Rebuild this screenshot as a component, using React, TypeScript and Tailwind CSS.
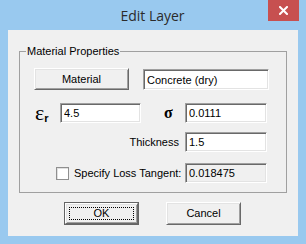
const sunken =
  'border border-t-[#a0a0a0] border-l-[#a0a0a0] border-b-white border-r-white shadow-[inset_1px_1px_0_#696969,inset_-1px_-1px_0_#e3e3e3] outline-none pl-[3px] text-[11px] text-black';

const raised =
  'border border-t-white border-l-white border-b-[#696969] border-r-[#696969] shadow-[inset_1px_1px_0_#e3e3e3,inset_-1px_-1px_0_#a0a0a0] bg-[#f0f0f0] flex items-center justify-center';

function Field({ value, width, disabled }: { value: string; width: string; disabled?: boolean }) {
  return (
    <input
      readOnly
      defaultValue={value}
      className={`${sunken} ${width} h-[20px] ${disabled ? 'bg-[#f0f0f0] text-[#6d6d6d]' : 'bg-white'}`}
    />
  );
}

export default function App() {
  return (
    <div className="w-[306px] h-[244px] bg-[#99c9ef] flex flex-col font-['Liberation_Sans',Arial,sans-serif] text-[11px] text-black select-none">
      {/* Title bar */}
      <div className="relative h-[30px] flex items-center justify-center">
        <span className="font-['Open_Sans',sans-serif] text-[14px] text-[#2b2b2b] -ml-[1px]">Edit Layer</span>
        <div className="absolute top-0 right-[7px] w-[31px] h-[21px] bg-[#c75050] flex items-center justify-center">
          <svg width="9" height="9" viewBox="0 0 9 9">
            <path d="M1 1 L8 8 M8 1 L1 8" stroke="white" strokeWidth="2" strokeLinecap="square" />
          </svg>
        </div>
      </div>

      {/* Client area */}
      <div className="mx-[8px] h-[206px] bg-[#f0f0f0] flex flex-col">
        <fieldset className="ml-[11px] mt-[14px] w-[268px] border border-[#a0a0a0] pb-[9px] px-0 min-w-0">
          <legend className="ml-[6px] px-[1px] leading-[14px]">Material Properties</legend>

          {/* Material row */}
          <div className="flex ml-[14px] mt-[10px]">
            <div className={`${raised} w-[95px] h-[22px]`}>Material</div>
            <input
              readOnly
              defaultValue="Concrete (dry)"
              className={`${sunken} bg-white ml-[14px] mt-[1px] w-[126px] h-[21px]`}
            />
          </div>

          {/* Permittivity / conductivity */}
          <div className="flex items-center ml-[14px] mt-[13px]">
            <div className="w-[26px] h-[20px] flex items-end pl-[1px]">
              <span className="font-['Liberation_Serif',serif] text-[22px] leading-[20px]">ε</span>
              <span className="font-bold text-[11px] leading-[11px] -mb-[1px]">r</span>
            </div>
            <Field value="4.5" width="w-[81px]" />
            <div className="w-[44px] pl-[23px] font-['Liberation_Serif',serif] font-bold text-[16px] leading-[20px]">σ</div>
            <Field value="0.0111" width="w-[82px]" />
          </div>

          {/* Thickness */}
          <div className="flex items-center ml-[14px] mt-[9px]">
            <div className="w-[151px] flex justify-end pr-[6px]">Thickness</div>
            <Field value="1.5" width="w-[82px]" />
          </div>

          {/* Loss tangent */}
          <div className="flex items-center ml-[14px] mt-[11px]">
            <div className="w-[151px] flex items-center pl-[22px]">
              <div className="w-[13px] h-[13px] border border-[#8f8f8f] bg-white shadow-[inset_1px_1px_0_#e0e0e0]" />
              <span className="ml-[5px]">Specify Loss Tangent:</span>
            </div>
            <Field value="0.018475" width="w-[82px]" disabled />
          </div>
        </fieldset>

        {/* Dialog buttons */}
        <div className="flex ml-[56px] mt-[9px] gap-[27px]">
          <div className="w-[75px] h-[23px] border border-[#646464] flex">
            <div className={`${raised} flex-1 p-[3px]`}>
              <div className="w-full h-full border border-dotted border-black flex items-center justify-center">OK</div>
            </div>
          </div>
          <div className={`${raised} w-[75px] h-[23px]`}>Cancel</div>
        </div>
      </div>
    </div>
  );
}
